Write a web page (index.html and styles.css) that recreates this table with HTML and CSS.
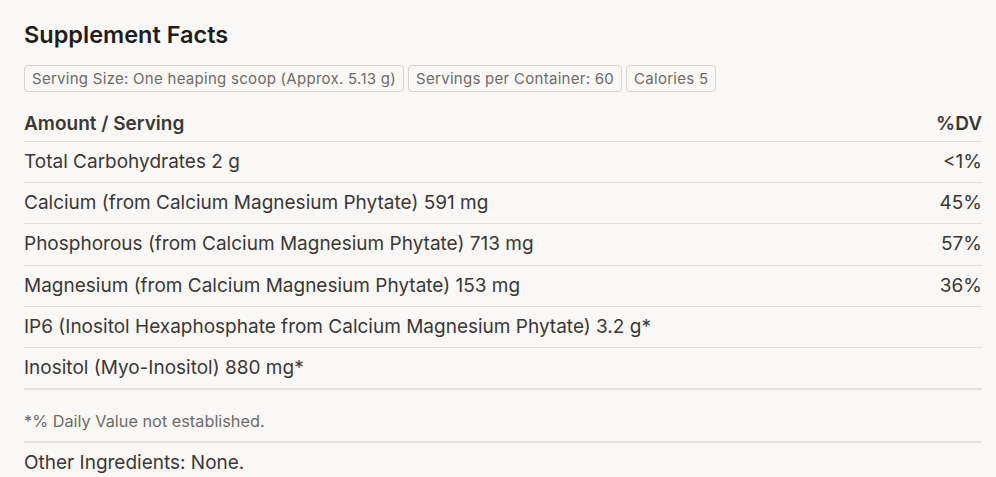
FILE: index.html
```html
<!DOCTYPE html>
<html>
<head>
    <title>Supplement Facts</title>
    <link rel="stylesheet" href="styles.css">
</head>
<body>
    <div class="facts">
        <h1>Supplement Facts</h1>
        <div class="pills">
            <span class="pill">Serving Size: One heaping scoop (Approx. 5.13 g)</span>
            <span class="pill">Servings per Container: 60</span>
            <span class="pill">Calories 5</span>
        </div>

        <div class="row head">
            <span>Amount / Serving</span>
            <span>%DV</span>
        </div>
        <div class="row">
            <span>Total Carbohydrates 2 g</span>
            <span>&lt;1%</span>
        </div>
        <div class="row">
            <span>Calcium (from Calcium Magnesium Phytate) 591 mg</span>
            <span>45%</span>
        </div>
        <div class="row">
            <span>Phosphorous (from Calcium Magnesium Phytate) 713 mg</span>
            <span>57%</span>
        </div>
        <div class="row">
            <span>Magnesium (from Calcium Magnesium Phytate) 153 mg</span>
            <span>36%</span>
        </div>
        <div class="row">
            <span>IP6 (Inositol Hexaphosphate from Calcium Magnesium Phytate) 3.2 g*</span>
            <span></span>
        </div>
        <div class="row last">
            <span>Inositol (Myo-Inositol) 880 mg*</span>
            <span></span>
        </div>

        <p class="note">*% Daily Value not established.</p>
        <p class="other">Other Ingredients: None.</p>
    </div>
</body>
</html>
```

FILE: styles.css
```css
body {
    font-family: Inter, "Open Sans", sans-serif;
    background-color: #f9f8f6;
    color: #3b3735;
    margin: 0;
    padding: 0;
}

.facts {
    padding: 20px 14px 0 24px;
}

h1 {
    font-size: 23.5px;
    font-weight: 600;
    color: #1f1c1a;
    margin: 0 0 15px 0;
    line-height: 30px;
}

.pills {
    display: flex;
    gap: 4px;
    margin-bottom: 15px;
}

.pill {
    font-size: 15px;
    letter-spacing: 0.28px;
    color: #6e6a67;
    border: 1px solid #d6d4d1;
    border-radius: 4px;
    padding: 0 7px;
    line-height: 25px;
}

.row {
    display: flex;
    justify-content: space-between;
    font-size: 19px;
    line-height: 40.2px;
    border-bottom: 1px solid #e3e1de;
}

.row.head {
    font-weight: 600;
    line-height: 34px;
}

.row.last {
    border-bottom: 2px solid #e3e1de;
}

.note {
    font-size: 16.3px;
    color: #6e6a67;
    margin: 0;
    padding-top: 11px;
    line-height: 40px;
    border-bottom: 2px solid #e3e1de;
}

.other {
    font-size: 19px;
    margin: 0;
    line-height: 40px;
}
```
